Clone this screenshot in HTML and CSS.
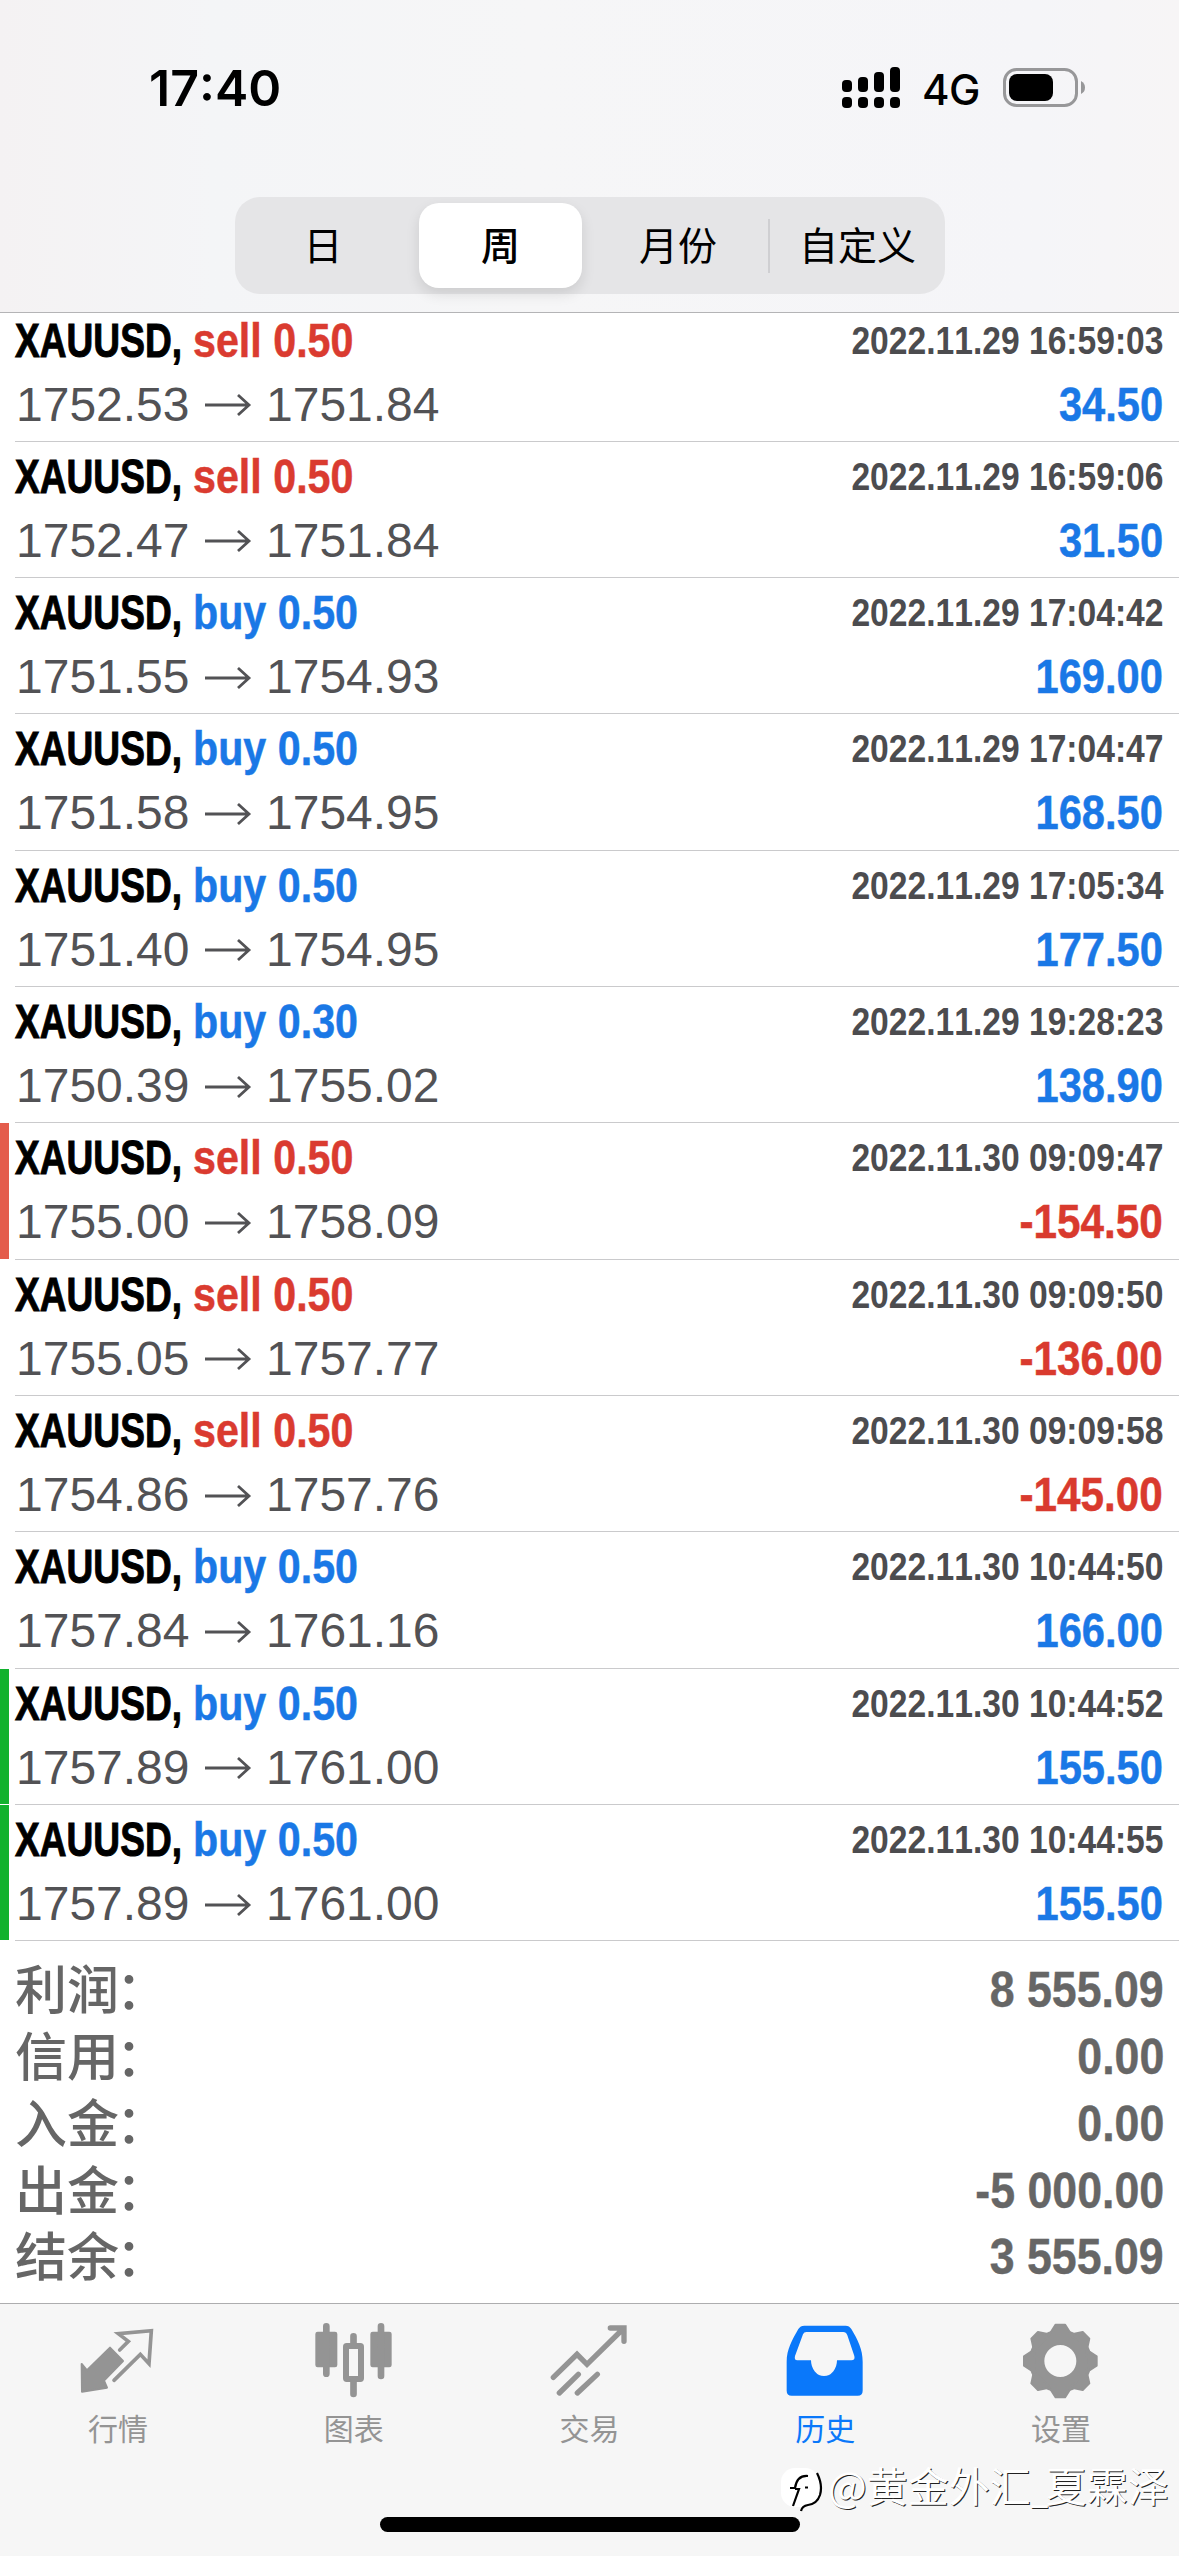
FILE: index.html
```html
<!DOCTYPE html>
<html lang="zh-CN">
<head>
<meta charset="utf-8">
<title>历史</title>
<link rel="stylesheet" href="styles.css">
</head>
<body>
<header class="header">
  <div class="status">
    <span class="time">17:40</span>
    <span class="status-right">
      <svg class="signal" width="58" height="42" viewBox="0 0 58 42">
        <rect x="0" y="13" width="10" height="12" rx="4"/><rect x="16" y="10" width="10" height="15" rx="4"/><rect x="32" y="5" width="10" height="20" rx="4"/><rect x="48" y="0" width="10" height="25" rx="4"/>
        <rect x="0" y="30" width="10" height="11" rx="4"/><rect x="16" y="30" width="10" height="11" rx="4"/><rect x="32" y="30" width="10" height="11" rx="4"/><rect x="48" y="30" width="10" height="11" rx="4"/>
      </svg>
      <span class="network">4G</span>
      <svg class="battery" width="83" height="39" viewBox="0 0 83 39">
        <rect x="1.5" y="1.5" width="72" height="36" rx="12" fill="none" stroke="#979799" stroke-width="3"/>
        <rect x="6" y="6" width="44" height="27" rx="8"/>
        <path d="M78 13Q82 15 82 19.500T78 26Z" fill="#979799"/>
      </svg>
    </span>
  </div>
  <nav class="segments">
    <span class="segment">日</span>
    <span class="segment selected">周</span>
    <span class="segment">月份</span>
    <span class="segment divided">自定义</span>
  </nav>
</header>
<main>
  <div class="deals" id="deals"></div>
  <dl class="summary">
    <div class="total"><dt>利润<i>：</i></dt><dd>8 555.09</dd></div>
    <div class="total"><dt>信用<i>：</i></dt><dd>0.00</dd></div>
    <div class="total"><dt>入金<i>：</i></dt><dd>0.00</dd></div>
    <div class="total"><dt>出金<i>：</i></dt><dd>-5 000.00</dd></div>
    <div class="total"><dt>结余<i>：</i></dt><dd>3 555.09</dd></div>
  </dl>
</main>
<footer class="tabbar">
  <a class="tab">
    <svg class="icon" viewBox="0 0 240 240"><path class="solid" d="M96 83L135 123L78 182L87 203L12 215L11 132L27 151Z"/><path class="line" stroke-width="11" d="M125 90L151 64L121 41L220 32L213 131L187 103L108 181"/></svg>
    <span>行情</span>
  </a>
  <a class="tab">
    <svg class="icon" viewBox="0 0 240 240"><rect class="fill" x="4" y="35" width="66" height="107" rx="7"/><rect class="fill" x="169" y="35" width="64" height="107" rx="7"/><rect class="line" x="96" y="78" width="45" height="99" rx="2" stroke-width="18"/><path class="line" stroke-width="20" d="M37 19V161M201 19V168M118.500 49V74M118.500 182V222"/></svg>
    <span>图表</span>
  </a>
  <a class="tab">
    <svg class="icon" viewBox="0 0 240 240"><path class="line" stroke-width="16" d="M13 172L84 103L114 133L222 27M184 24H225V64M31 219L88 163M85 219L145 163"/></svg>
    <span>交易</span>
  </a>
  <a class="tab active">
    <svg class="icon" viewBox="0 0 240 240"><path class="fill" fill-rule="evenodd" d="M58 17H182Q193 17 199 27C218 59 233 88 233 125V212Q233 227 218 227H20Q5 227 5 212V125C5 88 22 59 40 27Q46 17 58 17ZM64 36Q57 36 54 43L30 108Q27 121 37 121H78A39 47 0 0 0 156 121H199Q211 121 208 108L187 46Q183 36 175 36Z"/></svg>
    <span>历史</span>
  </a>
  <a class="tab">
    <svg class="icon" viewBox="0 0 240 240">
      <defs><path id="tooth" class="solid" d="M84 45L104 14H132L152 45Z"/></defs>
      <circle cx="118" cy="123" r="71" fill="none" stroke="currentColor" stroke-width="46"/>
      <use href="#tooth"/><use href="#tooth" transform="rotate(45 118 123)"/><use href="#tooth" transform="rotate(90 118 123)"/><use href="#tooth" transform="rotate(135 118 123)"/><use href="#tooth" transform="rotate(180 118 123)"/><use href="#tooth" transform="rotate(225 118 123)"/><use href="#tooth" transform="rotate(270 118 123)"/><use href="#tooth" transform="rotate(315 118 123)"/>
    </svg>
    <span>设置</span>
  </a>
  <div class="home-indicator"></div>
  <div class="watermark">
    <svg width="44" height="48" viewBox="0 0 44 48"><rect x="1" y="1" width="38" height="39" rx="14" fill="#fff"/><path d="M10 21H15Q17 8 28 9M15 22H19L13 39M37 6Q43 18 40 28Q37 37 28 38Q22 39 21 44M25 20.500H28" fill="none" stroke="#000" stroke-width="2.200"/></svg>
    <span>@黄金外汇<b>_</b>夏霖泽</span>
  </div>
</footer>
<script src="deals.js"></script>
</body>
</html>
```
FILE: deals.js
```js
const deals = [
  ["sell", "0.50", "1752.53", "1751.84", "2022.11.29 16:59:03", "34.50"],
  ["sell", "0.50", "1752.47", "1751.84", "2022.11.29 16:59:06", "31.50"],
  ["buy", "0.50", "1751.55", "1754.93", "2022.11.29 17:04:42", "169.00"],
  ["buy", "0.50", "1751.58", "1754.95", "2022.11.29 17:04:47", "168.50"],
  ["buy", "0.50", "1751.40", "1754.95", "2022.11.29 17:05:34", "177.50"],
  ["buy", "0.30", "1750.39", "1755.02", "2022.11.29 19:28:23", "138.90"],
  ["sell", "0.50", "1755.00", "1758.09", "2022.11.30 09:09:47", "-154.50", "stop"],
  ["sell", "0.50", "1755.05", "1757.77", "2022.11.30 09:09:50", "-136.00"],
  ["sell", "0.50", "1754.86", "1757.76", "2022.11.30 09:09:58", "-145.00"],
  ["buy", "0.50", "1757.84", "1761.16", "2022.11.30 10:44:50", "166.00"],
  ["buy", "0.50", "1757.89", "1761.00", "2022.11.30 10:44:52", "155.50", "take"],
  ["buy", "0.50", "1757.89", "1761.00", "2022.11.30 10:44:55", "155.50", "take"],
];

document.getElementById("deals").innerHTML = deals.map(([side, lots, open, close, time, profit, mark = ""]) => `
  <article class="deal ${mark}">
    <div class="name"><span class="symbol">XAUUSD,</span><span class="side ${side}">${side} ${lots}</span></div>
    <time class="date">${time}</time>
    <div class="prices"><span>${open}</span><svg class="arrow" width="48" height="24" viewBox="0 0 48 24"><path d="M1 12H45M34 2L45 12L34 22" fill="none" stroke="currentColor" stroke-width="2.800"/></svg><span>${close}</span></div>
    <div class="profit ${profit.startsWith("-") ? "loss" : ""}">${profit}</div>
  </article>`).join("");
```
FILE: styles.css
```css
* { box-sizing: border-box; }

body {
  margin: 0;
  width: 1179px;
  height: 2556px;
  overflow: hidden;
  display: flex;
  flex-direction: column;
  background: #fff;
  font-family: "Liberation Sans", "Noto Sans CJK SC", sans-serif;
  font-kerning: none;
}

.header {
  flex: none;
  height: 313px;
  background: linear-gradient(90deg, #f4f2f3, #f4f5f7 18%, #f6f6f7 45%, #f5f5f8 88%, #f7f5f6);
  border-bottom: 1px solid #b4b4b6;
  position: relative;
  z-index: 1;
}

.status {
  height: 197px;
  padding: 58px 93px 0 149px;
  display: flex;
  justify-content: space-between;
  align-items: flex-start;
  font-family: Inter, sans-serif;
}
.time { font-size: 50px; line-height: 60px; font-weight: 600; }
.status-right { display: flex; align-items: flex-start; }
.signal { margin-top: 9px; }
.network { width: 56px; margin: 0 25px 0 22px; font-size: 42px; line-height: 63px; font-weight: 500; letter-spacing: -0.5px; }
.battery { margin-top: 10px; }

.segments {
  width: 710px;
  height: 97px;
  margin-left: 235px;
  display: grid;
  grid-template-columns: 176px 177px 180px 177px;
  align-items: center;
  border-radius: 25px;
  background: #e5e5e7;
}
.segment {
  height: 85px;
  line-height: 80px;
  text-align: center;
  font-family: "Noto Sans CJK SC", sans-serif;
  font-size: 39px;
}
.selected { margin: 0 6px 0 8px; border-radius: 20px; background: #fff; font-weight: 500; box-shadow: 0 6px 14px rgba(0, 0, 0, 0.11); }
.divided { height: 54px; line-height: 48px; border-left: 2px solid #cfcfd2; }

.deals { margin-top: -7.500px; }
.deal {
  height: 136.330px;
  padding: 0 16px 0 15px;
  display: grid;
  grid-template-columns: 1fr auto;
  grid-template-rows: 70px 58px;
  position: relative;
}
.deal::after {
  content: "";
  position: absolute;
  left: 15px;
  right: 0;
  bottom: 0;
  height: 1px;
  background: #cacacc;
}
.stop::before, .take::before {
  content: "";
  position: absolute;
  left: 0;
  top: 0;
  bottom: 1px;
  width: 9px;
  background: #e45c4c;
}
.take::before { background: #12b22e; }

.name { display: grid; grid-template-columns: 178px 1fr; line-height: 68.500px; font-size: 48.500px; font-weight: 700; white-space: nowrap; }
.symbol { transform: scaleX(0.765); transform-origin: 0 50%; -webkit-text-stroke: 1px currentColor; }
.side { transform: scaleX(0.85); transform-origin: 0 50%; -webkit-text-stroke: 0.500px currentColor; }
.sell { color: #da3b30; }
.buy { color: #1a78e6; }
.date { justify-self: end; font-size: 38.500px; line-height: 69px; font-weight: 700; color: #4c4c4f; transform: scaleX(0.873); transform-origin: 100% 50%; white-space: nowrap; }
.prices { display: flex; align-items: center; padding-left: 1px; font-size: 48px; line-height: 58px; color: #525255; }
.prices span { width: 188px; }
.arrow { margin: 1px 14px 0 0; }
.profit { justify-self: end; font-size: 48px; line-height: 58px; font-weight: 700; color: #1a78e6; transform: scaleX(0.867); transform-origin: 100% 50%; -webkit-text-stroke: 0.500px currentColor; }
.loss { color: #d93a2e; transform: scaleX(0.88); }

.summary { margin: 0; padding: 16px 15px 0; height: 362px; color: #666; }
.total { display: flex; justify-content: space-between; height: 66.700px; line-height: 66.700px; }
.total dt { font-family: "Noto Sans CJK SC", sans-serif; font-size: 52px; line-height: 59px; font-weight: 500; }
.total i { margin-left: -3px; font-style: normal; }
.total dd { margin: 0; font-size: 49.500px; font-weight: 700; transform: scaleX(0.903); transform-origin: 100% 50%; -webkit-text-stroke: 0.400px currentColor; }

.tabbar {
  flex: 1;
  position: relative;
  display: grid;
  grid-template-columns: repeat(5, 1fr);
  background: #f6f6f6;
  border-top: 1px solid #adadaf;
}
.tab { display: flex; flex-direction: column; align-items: center; padding-top: 16px; color: #949494; font-family: "Noto Sans CJK SC", sans-serif; font-size: 30px; line-height: 44px; }
.tab span { margin-top: 5px; }
.active { color: #0a78fa; }
.icon { width: 80px; height: 80px; }
.fill { fill: currentColor; }
.solid { fill: currentColor; stroke: currentColor; stroke-width: 6; stroke-linejoin: round; }
.line { fill: none; stroke: currentColor; stroke-linecap: round; stroke-linejoin: miter; }

.home-indicator { position: absolute; left: 380px; top: 213px; width: 420px; height: 15px; border-radius: 8px; background: #000; }
.watermark { position: absolute; left: 780px; top: 148px; display: flex; align-items: center; color: #fff; font: 41px/60px "Noto Sans CJK SC", sans-serif; text-shadow: 1px 1px 0 #222; white-space: nowrap; }
.watermark svg { margin: 15px 4px 0 0; }
.watermark b { display: inline-block; width: 15px; font-weight: 400; transform: scaleX(0.75); transform-origin: 0 50%; }
```
